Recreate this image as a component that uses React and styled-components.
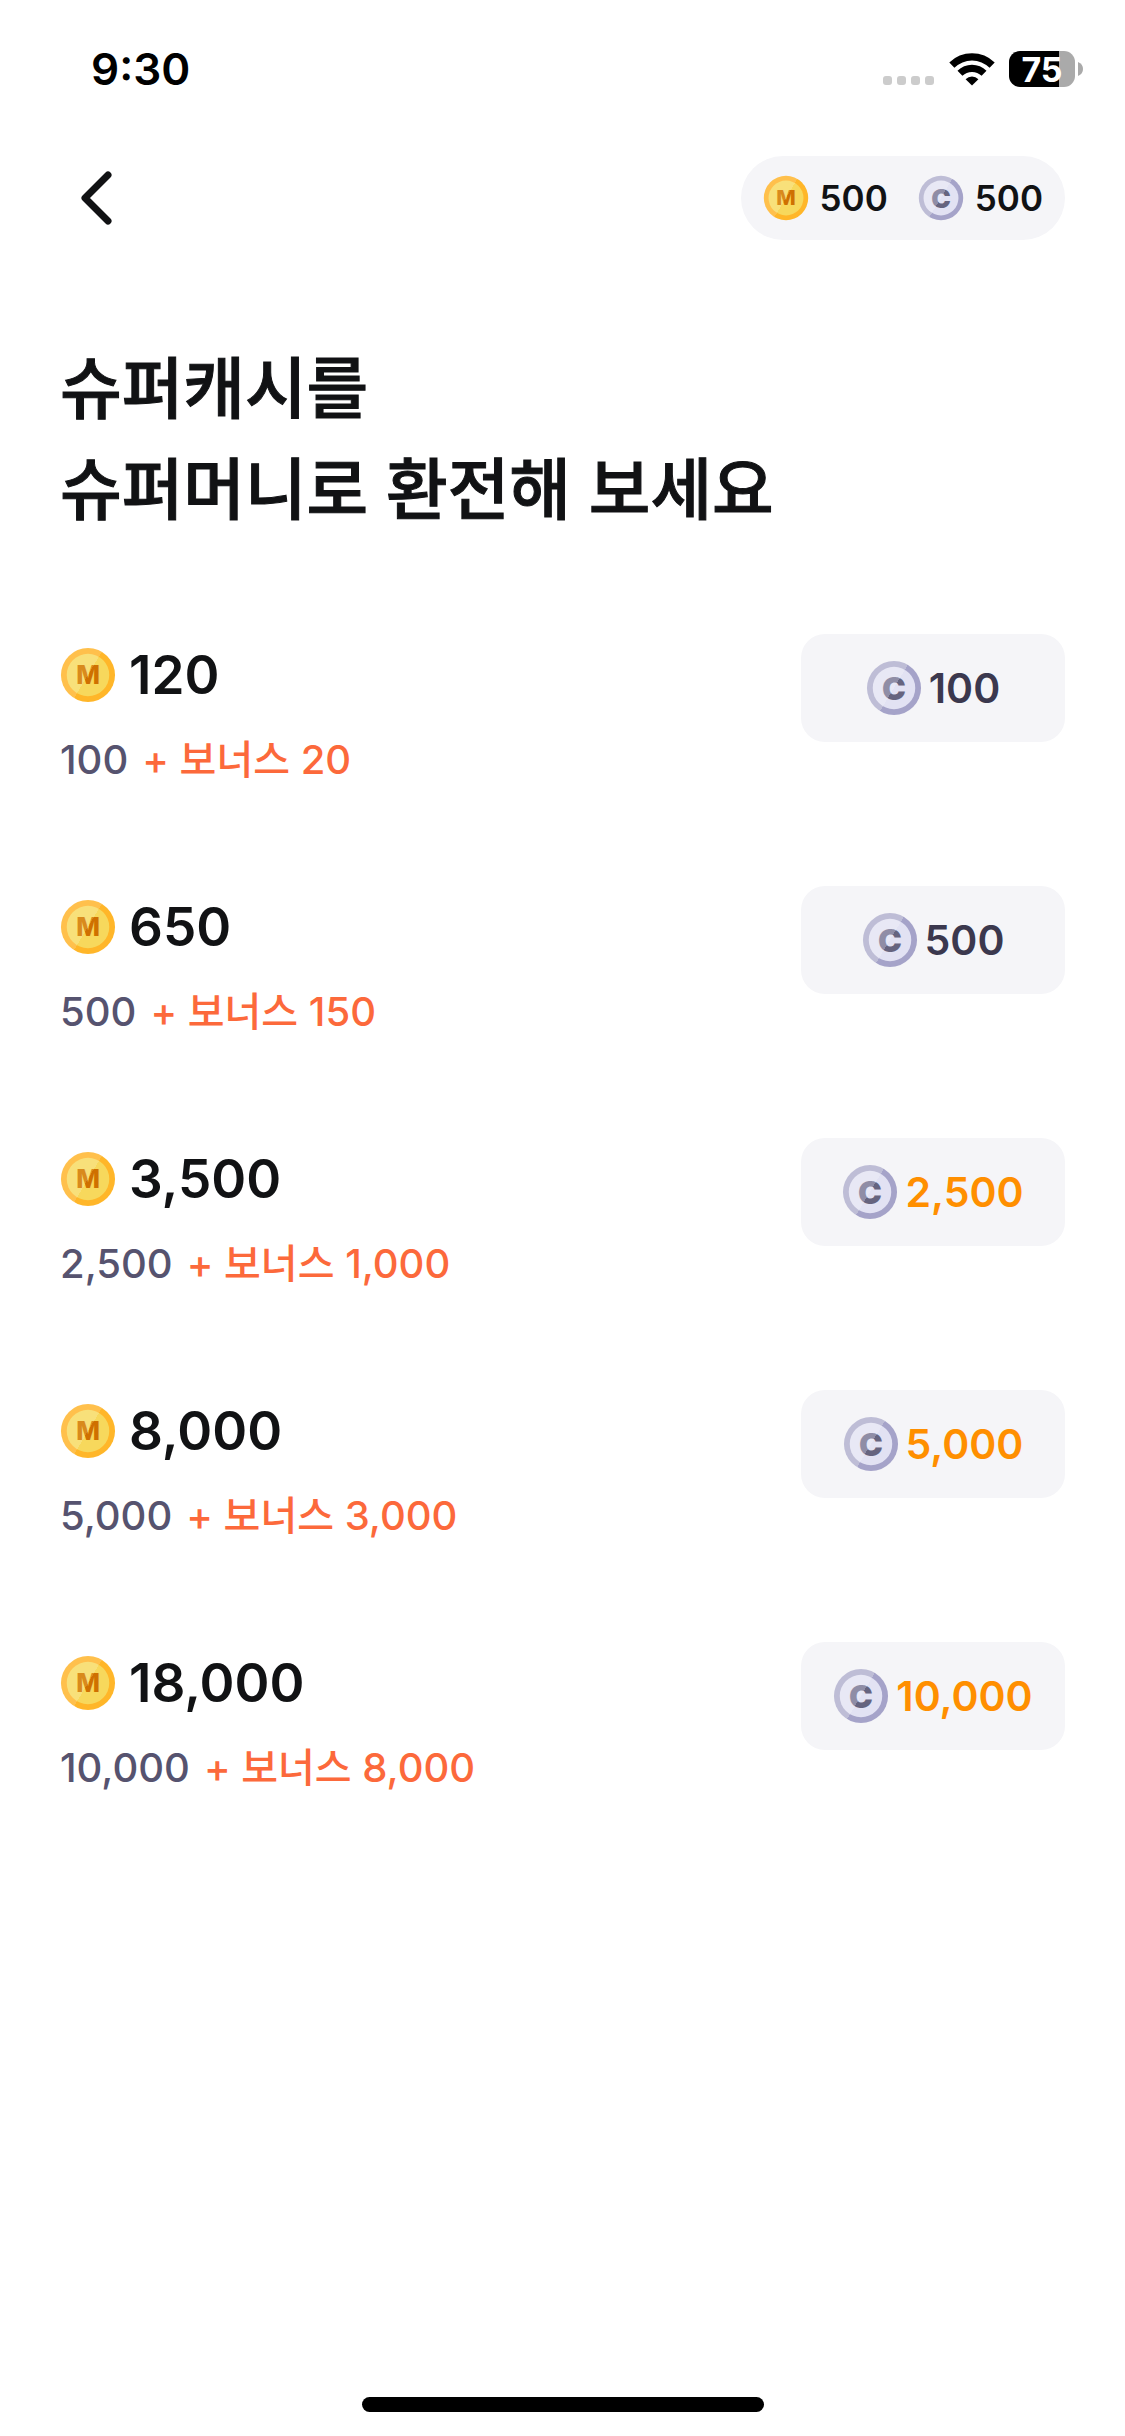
import React from "react";
import styled, { createGlobalStyle } from "styled-components";

const GlobalStyle = createGlobalStyle`
  * {
    box-sizing: border-box;
  }
  body {
    margin: 0;
    background: #ffffff;
    color: #111214;
    font-family: Inter, "Noto Sans CJK KR", sans-serif;
  }
`

const Screen = styled.div`
  display: flex;
  flex-direction: column;
  width: 100%;
  min-height: 100vh;
`

const StatusBar = styled.div`
  display: flex;
  align-items: center;
  justify-content: space-between;
  height: 138px;
  padding: 0 42px 0 91px;
`

const Time = styled.span`
  font-size: 44px;
  font-weight: 600;
  line-height: 60px;
  color: #000000;
`

const StatusIcons = styled.div`
  display: flex;
  align-items: center;
  gap: 14px;
`

const Battery = styled.div`
  display: flex;
  align-items: center;
  gap: 3px;
`

const BatteryLevel = styled.span`
  display: flex;
  align-items: center;
  justify-content: center;
  width: 66px;
  height: 36px;
  border-radius: 11px;
  background: linear-gradient(90deg, #000000 76%, #aaaaaa 76%);
  color: #ffffff;
  font-size: 34px;
  font-weight: 700;
`

const NavBar = styled.header`
  display: flex;
  align-items: center;
  justify-content: space-between;
  height: 120px;
  padding: 0 60px;
`

const BackButton = styled.button`
  display: flex;
  align-items: center;
  justify-content: center;
  width: 72px;
  height: 72px;
  padding: 0;
  border: 0;
  background: none;
  cursor: pointer;
`

const Wallet = styled.div`
  display: flex;
  align-items: center;
  gap: 30px;
  height: 84px;
  padding: 0 22px;
  border-radius: 42px;
  background: #f5f5f8;
`

const Balance = styled.span`
  display: flex;
  align-items: center;
  gap: 11px;
  font-size: 35px;
  font-weight: 600;
  line-height: 48px;
`

const Main = styled.main`
  flex: 1;
  padding: 80px 60px 60px;
`

const Title = styled.h1`
  margin: 0;
  font-size: 67px;
  font-weight: 500;
  line-height: 101px;
  -webkit-text-stroke: 1px #111214;
`

const OfferList = styled.ul`
  display: flex;
  flex-direction: column;
  gap: 96px;
  margin: 94px 0 0;
  padding: 0;
  list-style: none;
`

const Offer = styled.li`
  display: flex;
  align-items: flex-start;
  justify-content: space-between;
  height: 156px;
`

const OfferInfo = styled.div`
  display: flex;
  flex-direction: column;
  gap: 14px;
`

const Total = styled.div`
  display: flex;
  align-items: center;
  gap: 13px;
  font-size: 53px;
  font-weight: 600;
  line-height: 82px;
`

const Detail = styled.div`
  display: flex;
  gap: 14px;
  font-size: 40px;
  font-weight: 500;
  line-height: 60px;
  color: #56536f;
`

const Bonus = styled.span`
  color: #fc693b;
`

const PriceButton = styled.button`
  display: flex;
  align-items: center;
  justify-content: center;
  gap: 7px;
  width: 264px;
  height: 108px;
  padding: 0;
  border: 0;
  border-radius: 24px;
  background: #f5f5f8;
  color: ${props => props.$short ? "#ff8f00" : "#3b384e"};
  font-family: inherit;
  font-size: 41px;
  font-weight: 600;
  cursor: pointer;
`

const HomeIndicator = styled.div`
  width: 402px;
  height: 15px;
  margin: 0 auto 24px;
  border-radius: 8px;
  background: #000000;
`

const CoinSvg = styled.svg`
  flex: none;
  font-family: Inter, sans-serif;
`

const coins = {
  M: {
    ring: ["#ffc04c", "#ffb629"],
    face: ["#f8e07a", "#f7d85c"],
    letter: ["#d98a1c", "#cf7000"],
    fontSize: 26,
    fontWeight: 800,
    baseline: 37,
  },
  C: {
    ring: ["#bebdd6", "#a5a3c9"],
    face: ["#e8e8f5", "#e2e2f3"],
    letter: ["#8f8da6", "#66647f"],
    fontSize: 33,
    fontWeight: 900,
    baseline: 40,
  },
}

const Coin = ({ type, size }) => {
  const { ring, face, letter, fontSize, fontWeight, baseline } = coins[type]
  const id = part => `coin-${type}-${part}`
  const split = (part, [from, to]) => (
    <linearGradient id={id(part)} gradientUnits="userSpaceOnUse" x1="8" y1="16" x2="48" y2="40">
      <stop offset="0.5" stopColor={from} />
      <stop offset="0.5" stopColor={to} />
    </linearGradient>
  )
  return (
    <CoinSvg width={size} height={size} viewBox="-1 -1 58 58" aria-hidden="true">
      <defs>
        {split("ring", ring)}
        {split("face", face)}
        {split("letter", letter)}
      </defs>
      <circle cx="28" cy="28" r="28" fill={`url(#${id("ring")})`} />
      <circle cx="28" cy="28" r="22" fill={`url(#${id("face")})`} />
      <text
        x="28"
        y={baseline}
        fontSize={fontSize}
        fontWeight={fontWeight}
        textAnchor="middle"
        fill={`url(#${id("letter")})`}
      >
        {type}
      </text>
    </CoinSvg>
  )
}

const SignalIcon = () => (
  <svg width="52" height="36" viewBox="0 0 52 36" aria-hidden="true">
    {[0, 14, 28, 42].map(x => <rect key={x} x={x} y="25" width="9" height="9" rx="3" fill="#cccccc" />)}
  </svg>
)

const WifiIcon = () => (
  <svg width="46" height="34" viewBox="0 0 46 34" aria-hidden="true">
    <path d="M23 33.5 L16.6 27.2 A9.2 9.2 0 0 1 29.4 27.2 Z" />
    <path d="M8.5 18.8 A20.5 20.5 0 0 1 37.5 18.8 L32.6 23.8 A14 14 0 0 0 13.4 23.8 Z" />
    <path d="M0.3 10.6 A32 32 0 0 1 45.7 10.6 L40.6 15.8 A25 25 0 0 0 5.4 15.8 Z" />
  </svg>
)

const offers = [
  { total: "120", base: "100", bonus: "20", price: "100" },
  { total: "650", base: "500", bonus: "150", price: "500" },
  { total: "3,500", base: "2,500", bonus: "1,000", price: "2,500", short: true },
  { total: "8,000", base: "5,000", bonus: "3,000", price: "5,000", short: true },
  { total: "18,000", base: "10,000", bonus: "8,000", price: "10,000", short: true },
]

const App = () => (
  <Screen>
    <GlobalStyle />
    <StatusBar>
      <Time>9:30</Time>
      <StatusIcons>
        <SignalIcon />
        <WifiIcon />
        <Battery>
          <BatteryLevel>75</BatteryLevel>
          <svg width="5" height="14" viewBox="0 0 5 14" aria-hidden="true">
            <path d="M0 0 Q5 2 5 7 Q5 12 0 14 Z" fill="#aaaaaa" />
          </svg>
        </Battery>
      </StatusIcons>
    </StatusBar>
    <NavBar>
      <BackButton aria-label="뒤로">
        <svg width="72" height="72" viewBox="0 0 72 72" fill="none" stroke="#111214" strokeWidth="7" strokeLinecap="round" strokeLinejoin="round">
          <path d="M48 13 L25 36 L48 59" />
        </svg>
      </BackButton>
      <Wallet>
        <Balance><Coin type="M" size={46} />500</Balance>
        <Balance><Coin type="C" size={46} />500</Balance>
      </Wallet>
    </NavBar>
    <Main>
      <Title>슈퍼캐시를<br />슈퍼머니로 환전해 보세요</Title>
      <OfferList>
        {offers.map(offer => (
          <Offer key={offer.total}>
            <OfferInfo>
              <Total><Coin type="M" size={56} />{offer.total}</Total>
              <Detail>
                <span>{offer.base}</span>
                <Bonus>+ 보너스 {offer.bonus}</Bonus>
              </Detail>
            </OfferInfo>
            <PriceButton $short={offer.short}>
              <Coin type="C" size={56} />
              {offer.price}
            </PriceButton>
          </Offer>
        ))}
      </OfferList>
    </Main>
    <HomeIndicator />
  </Screen>
)

export default App
